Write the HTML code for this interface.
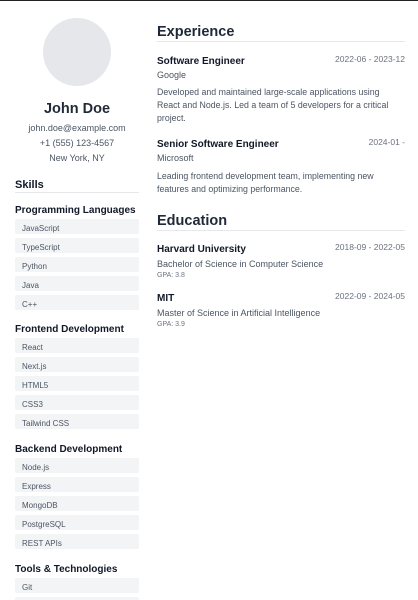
<!DOCTYPE html>
<html><head><style>
*{margin:0;padding:0;box-sizing:border-box}
html,body{height:600px;overflow:hidden}
body{width:418px;background:#fff;font-family:"Liberation Sans",sans-serif;color:#1f2937;position:relative;border-top:1px solid #222}
.a{position:absolute;white-space:nowrap}
.c{left:15px;width:124px;text-align:center}
.chip{position:absolute;left:15px;width:124px;height:15px;background:#f3f4f6;border-radius:2px;font-size:8px;color:#4b5563;padding:5px 0 0 7px}
.cat{position:absolute;left:15px;font-size:10px;font-weight:bold;color:#111827}
.g{color:#4b5563}
.d{position:absolute;right:13px;font-size:8.5px;color:#6b7280}
.t{position:absolute;left:157px;font-size:10px;font-weight:bold;color:#111827}
.s{position:absolute;left:157px;font-size:9px;color:#4b5563}
.p{position:absolute;left:157px;width:236px;font-size:8.8px;line-height:13px;color:#4b5563;white-space:normal}
.h{position:absolute;left:157px;width:248px;font-size:14.5px;font-weight:bold;color:#1f2937;border-bottom:1px solid #e5e7eb;padding-bottom:1px}
</style></head><body>
<div class="a" style="left:43px;top:17px;width:68px;height:68px;border-radius:50%;background:#e5e7eb"></div>
<div class="a c" style="top:100px;font-size:14.5px;font-weight:bold;color:#1f2937">John Doe</div>
<div class="a c g" style="top:122px;font-size:9px">john.doe@example.com</div>
<div class="a c g" style="top:137px;font-size:9px">+1 (555) 123-4567</div>
<div class="a c g" style="top:152px;font-size:9px">New York, NY</div>
<div class="a" style="left:15px;top:178px;width:124px;font-size:11px;font-weight:bold;border-bottom:1px solid #e5e7eb;padding-bottom:1px;color:#111827">Skills</div>
<div class="cat" style="top:204px">Programming Languages</div>
<div class="chip" style="top:218px">JavaScript</div>
<div class="chip" style="top:237px">TypeScript</div>
<div class="chip" style="top:256px">Python</div>
<div class="chip" style="top:275px">Java</div>
<div class="chip" style="top:294px">C++</div>
<div class="cat" style="top:323px">Frontend Development</div>
<div class="chip" style="top:337px">React</div>
<div class="chip" style="top:356px">Next.js</div>
<div class="chip" style="top:375px">HTML5</div>
<div class="chip" style="top:394px">CSS3</div>
<div class="chip" style="top:413px">Tailwind CSS</div>
<div class="cat" style="top:443px">Backend Development</div>
<div class="chip" style="top:457px">Node.js</div>
<div class="chip" style="top:476px">Express</div>
<div class="chip" style="top:495px">MongoDB</div>
<div class="chip" style="top:514px">PostgreSQL</div>
<div class="chip" style="top:533px">REST APIs</div>
<div class="cat" style="top:563px">Tools &amp; Technologies</div>
<div class="chip" style="top:577px">Git</div>
<div class="chip" style="top:596px;height:4px"></div>

<div class="h" style="top:23px">Experience</div>
<div class="t" style="top:55px">Software Engineer</div>
<div class="d" style="top:53px">2022-06 - 2023-12</div>
<div class="s" style="top:69px">Google</div>
<div class="p" style="top:85px">Developed and maintained large-scale applications using React and Node.js. Led a team of 5 developers for a critical project.</div>
<div class="t" style="top:138px">Senior Software Engineer</div>
<div class="d" style="top:136px">2024-01 -</div>
<div class="s" style="top:152px">Microsoft</div>
<div class="p" style="top:169px">Leading frontend development team, implementing new features and optimizing performance.</div>
<div class="h" style="top:212px">Education</div>
<div class="t" style="top:243px">Harvard University</div>
<div class="d" style="top:241px">2018-09 - 2022-05</div>
<div class="s" style="top:258px">Bachelor of Science in Computer Science</div>
<div class="s" style="top:271px;font-size:7px;color:#6b7280">GPA: 3.8</div>
<div class="t" style="top:292px">MIT</div>
<div class="d" style="top:290px">2022-09 - 2024-05</div>
<div class="s" style="top:307px">Master of Science in Artificial Intelligence</div>
<div class="s" style="top:320px;font-size:7px;color:#6b7280">GPA: 3.9</div>
</body></html>
